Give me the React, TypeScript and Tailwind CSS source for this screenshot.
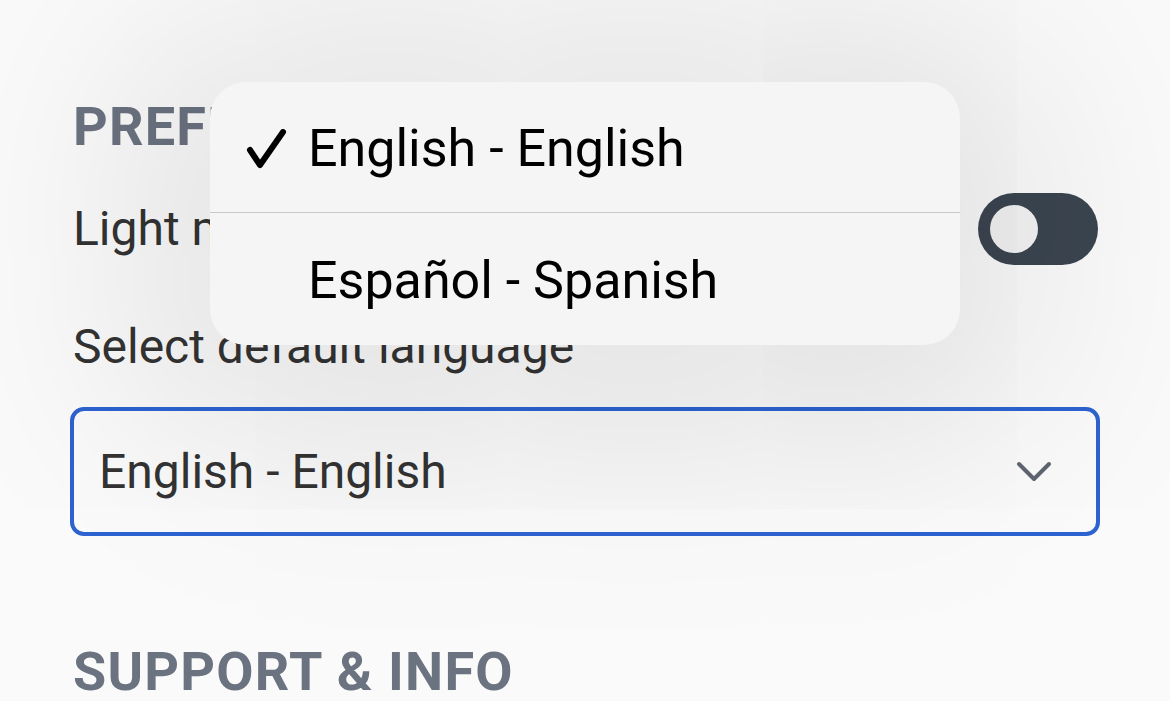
import React from "react";

export default function App() {
  return (
    <div
      className="relative w-[1170px] h-[701px] overflow-hidden bg-[#fafafa]"
      style={{ fontFamily: "Roboto, 'Liberation Sans', sans-serif" }}
    >
      <div className="px-[70px] pt-[100px] flex flex-col">
        <h2 className="text-[54px] leading-[54px] font-bold tracking-[1.2px] text-[#6b7280] pl-[3px]">
          PREFERENCES
        </h2>
        <div className="mt-[39px] flex items-center justify-between pr-[2px]">
          <span className="text-[48px] leading-[48px] text-[#333333] pl-[3px]">Light mode</span>
          <div className="w-[120px] h-[72px] rounded-full bg-[#3b4550] flex items-center pl-[12px]">
            <div className="w-[48px] h-[48px] rounded-full bg-[#f3f3f3]" />
          </div>
        </div>
        <span className="mt-[58px] text-[48px] leading-[48px] text-[#333333] pl-[3px]">
          Select default language
        </span>
        <div className="mt-[36px] h-[129px] w-[1030px] rounded-[14px] border-[4px] border-[#2d63d1] flex items-center justify-between pl-[25px] pr-[44px]">
          <span className="text-[48px] leading-[48px] text-[#333333]">English - English</span>
          <svg width="36" height="22" viewBox="0 0 36 22" fill="none">
            <path d="M3 3 L18 18 L33 3" stroke="#5f6670" strokeWidth="4" strokeLinecap="round" strokeLinejoin="round" />
          </svg>
        </div>
        <h2 className="mt-[109px] text-[54px] leading-[54px] font-bold tracking-[1.2px] text-[#6b7280] pl-[3px]">
          SUPPORT &amp; INFO
        </h2>
      </div>

      <div className="absolute left-[210px] top-[82px] w-[750px] h-[263px] rounded-[36px] bg-[#f5f5f5] shadow-[0_20px_220px_80px_rgba(0,0,0,0.1)] flex flex-col overflow-hidden">
        <div className="h-[131px] flex items-center pl-[36px] pt-[4px] border-b-[1.5px] border-[#c8c8c8]">
          <svg width="44" height="40" viewBox="0 0 44 40" fill="none" className="mr-[18px]">
            <path d="M4 21 L14 36 L37 3" stroke="#000" strokeWidth="6" strokeLinecap="round" strokeLinejoin="round" />
          </svg>
          <span className="text-[52px] leading-[52px] text-black">English - English</span>
        </div>
        <div className="flex-1 flex items-center pl-[98px] pt-[3px]">
          <span className="text-[52px] leading-[52px] text-black">Español - Spanish</span>
        </div>
      </div>
    </div>
  );
}
